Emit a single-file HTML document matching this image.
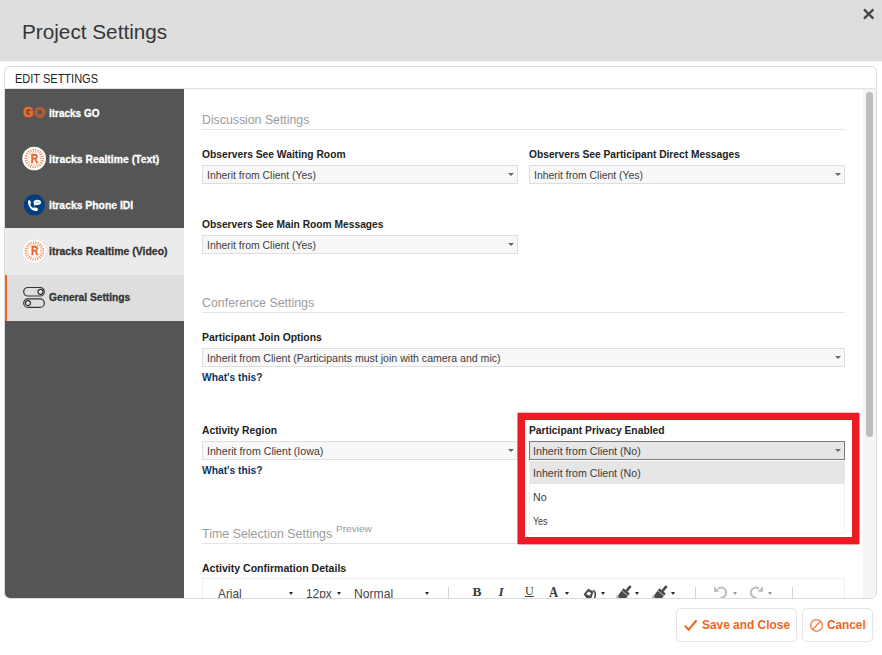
<!DOCTYPE html>
<html lang="en">
<head>
<meta charset="utf-8">
<title>Project Settings</title>
<style>
html,body{margin:0;padding:0;}
body{width:882px;height:655px;position:relative;overflow:hidden;background:#fff;
  font-family:"Liberation Sans",sans-serif;color:#222;}
.abs{position:absolute;}
.t{position:absolute;white-space:nowrap;line-height:1;transform-origin:0 0;display:block;}
.b{font-weight:bold;}
#hdr{left:0;top:0;width:882px;height:61px;background:#dedede;}
#panel{left:4px;top:66px;width:873px;height:533px;box-sizing:border-box;border:1px solid #dadada;
  border-radius:6px;overflow:hidden;background:#fff;}
#pg{left:-5px;top:-67px;width:882px;height:655px;}
#side{left:5px;top:89px;width:179px;height:509px;background:#555;}
.row{position:absolute;left:5px;width:179px;}
.lbl{font-size:11px;font-weight:bold;color:#222;}
.sec{font-size:13px;color:#9c9c9c;}
.hr{position:absolute;left:202px;width:643px;height:1px;background:#e4e4e4;}
.sel{position:absolute;box-sizing:border-box;height:19px;border:1px solid #dedede;background:#f8f8f8;}
.sel i{position:absolute;right:3px;top:7px;width:0;height:0;border-left:3.2px solid transparent;
  border-right:3.2px solid transparent;border-top:3.6px solid #666;}
.st{font-size:11px;color:#3c3c3c;}
.lnk{font-size:11px;font-weight:bold;color:#0b3562;}
.side-t{font-size:11px;font-weight:bold;color:#fff;-webkit-text-stroke:0.3px currentColor;}
.tb{font-size:13px;color:#444;}
.car{position:absolute;width:0;height:0;border-left:2.6px solid transparent;border-right:2.6px solid transparent;border-top:3.2px solid #2a2a2a;}
.ser{font-family:"Liberation Serif",serif;color:#3c3c3c;}
.vsep{position:absolute;width:1px;background:#d4d4d4;top:587px;height:12px;}
.btn{position:absolute;box-sizing:border-box;border:1px solid #e6e6e6;border-radius:5px;background:#fff;box-shadow:0 0 1px rgba(0,0,0,0.06);}
.bt{font-size:13px;font-weight:bold;color:#f26522;}
</style>
</head>
<body>
<div id="hdr" class="abs"></div>
<div class="abs" style="left:0;top:61px;width:882px;height:1px;background:#f2f2f2;"></div>
<span id="title" class="t" style="left:22.0px;top:23px;font-size:19.5px;color:#363636;transform:scaleX(1.063);">Project Settings</span>
<svg class="abs" style="left:860px;top:4.7px" width="18" height="18" viewBox="0 0 18 18" aria-label="Close">
  <path d="M4 4.4 L13.4 13.6 M13.4 4.4 L4 13.6" stroke="#484848" stroke-width="2.3" fill="none"/>
</svg>

<div id="panel" class="abs"><div id="pg" class="abs">
  <span id="edit" class="t" style="left:14.5px;top:72px;font-size:13.3px;color:#222;transform:scaleX(0.828);">EDIT SETTINGS</span>
  <div class="abs" style="left:5px;top:88px;width:872px;height:1px;background:#e4e4e4;"></div>
  <div class="abs" style="left:184px;top:89px;width:679px;height:1px;background:#f4f4f4;"></div>

  <!-- sidebar -->
  <div id="side" class="abs"></div>
  <div class="row" style="top:228px;height:46.5px;background:#ebebeb;"></div>
  <div class="row" style="top:274.5px;height:46px;background:#dedede;"></div>
  <div class="abs" style="left:5px;top:274.5px;width:2px;height:46px;background:#f26522;"></div>

  <!-- GO logo -->
  <svg class="abs" style="left:22px;top:104px" width="26" height="18" viewBox="0 0 26 18">
    <text transform="translate(0.9,13.2) scale(0.9,1)" font-family="Liberation Sans, sans-serif" font-weight="bold" font-size="14.6" fill="#f36c21" stroke="#f36c21" stroke-width="0.7">G</text>
    <circle cx="17.9" cy="8.3" r="3.95" fill="none" stroke="#f26522" stroke-width="3.3" opacity="0.5"/>
    <circle cx="17.9" cy="8.3" r="4.6" fill="none" stroke="#f26522" stroke-width="1.6" stroke-dasharray="1 1.1" opacity="0.45"/>
  </svg>
  <span id="s1" class="t side-t" style="left:48.9px;top:108px;font-size:11.0px;transform:scaleX(0.906);">itracks GO</span>

  <!-- Realtime text logo -->
  <svg class="abs" style="left:21px;top:146px" width="27" height="26" viewBox="0 0 27 26">
    <circle cx="13.2" cy="12.5" r="11.85" fill="#fff"/>
    <circle cx="13.2" cy="12.5" r="9" fill="none" stroke="#f26522" stroke-width="1.45" stroke-dasharray="0.01 2.56" stroke-linecap="round" opacity="0.85"/>
    <circle cx="13.2" cy="12.5" r="7.6" fill="none" stroke="#f26522" stroke-width="1.2" stroke-dasharray="0.01 2.16" stroke-linecap="round" opacity="0.8"/>
    <circle cx="13.2" cy="12.5" r="6.35" fill="none" stroke="#f26522" stroke-width="0.9" stroke-dasharray="0.01 1.8" stroke-linecap="round" opacity="0.7"/>
    <text transform="translate(13.549999999999999,16.8) scale(0.84,1)" text-anchor="middle" font-family="Liberation Sans, sans-serif" font-weight="bold" font-size="12.4" fill="#ea611d" stroke="#ea611d" stroke-width="0.35">R</text>
  </svg>
  <span id="s2" class="t side-t" style="left:48.9px;top:154px;font-size:11.0px;transform:scaleX(0.945);">itracks Realtime (Text)</span>

  <!-- Phone IDI logo -->
  <svg class="abs" style="left:21px;top:192px" width="27" height="26" viewBox="0 0 27 26">
    <circle cx="13.4" cy="13" r="10.6" fill="#013e82"/>
    <path d="M7.0 9.6 C7.0 8.4 8.2 8.0 9.0 8.6 C9.9 9.3 10.1 11.2 9.6 12.3 C9.2 13.0 9.4 13.6 10.2 14.5 C11.1 15.5 12.0 16.0 12.8 15.7 C14.0 15.2 16.0 15.6 16.8 16.6 C17.5 17.5 17.0 18.6 15.8 18.9 C13.6 19.4 10.9 18.2 9.0 15.7 C7.6 13.8 6.9 11.5 7.0 9.6 Z" fill="#fff"/>
    <ellipse cx="16.3" cy="10.3" rx="3.7" ry="2.6" fill="#fff"/>
    <path d="M13.4 11.3 L12.9 13.9 L15.6 12.5 Z" fill="#fff"/>
    <circle cx="15" cy="10.3" r="0.55" fill="#5c82b4"/><circle cx="16.3" cy="10.3" r="0.55" fill="#5c82b4"/><circle cx="17.6" cy="10.3" r="0.55" fill="#5c82b4"/>
  </svg>
  <span id="s3" class="t side-t" style="left:48.9px;top:200px;font-size:11.0px;transform:scaleX(0.943);">itracks Phone IDI</span>

  <!-- Realtime video logo -->
  <svg class="abs" style="left:21px;top:238px" width="27" height="26" viewBox="0 0 27 26">
    <circle cx="13.4" cy="13.0" r="11.5" fill="#fff"/>
    <circle cx="13.4" cy="13.0" r="9" fill="none" stroke="#f26522" stroke-width="1.45" stroke-dasharray="0.01 2.56" stroke-linecap="round" opacity="0.85"/>
    <circle cx="13.4" cy="13.0" r="7.6" fill="none" stroke="#f26522" stroke-width="1.2" stroke-dasharray="0.01 2.16" stroke-linecap="round" opacity="0.8"/>
    <circle cx="13.4" cy="13.0" r="6.35" fill="none" stroke="#f26522" stroke-width="0.9" stroke-dasharray="0.01 1.8" stroke-linecap="round" opacity="0.7"/>
    <text transform="translate(13.75,17.3) scale(0.84,1)" text-anchor="middle" font-family="Liberation Sans, sans-serif" font-weight="bold" font-size="12.4" fill="#ea611d" stroke="#ea611d" stroke-width="0.35">R</text>
  </svg>
  <span id="s4" class="t side-t" style="left:48.9px;top:246px;color:#333;font-size:11.0px;transform:scaleX(0.952);">itracks Realtime (Video)</span>

  <!-- General settings icon -->
  <svg class="abs" style="left:21px;top:285px" width="26" height="25" viewBox="0 0 26 25">
    <rect x="2.7" y="2.5" width="20.6" height="8.5" rx="4.25" fill="none" stroke="#333" stroke-width="1.2"/>
    <circle cx="19.5" cy="6.85" r="2.5" fill="#eee" stroke="#333" stroke-width="1.2"/>
    <rect x="2.7" y="13.9" width="20.6" height="8.5" rx="4.25" fill="none" stroke="#333" stroke-width="1.2"/>
    <circle cx="7" cy="18.1" r="2.5" fill="#eee" stroke="#333" stroke-width="1.2"/>
  </svg>
  <span id="s5" class="t side-t" style="left:48.9px;top:292px;color:#333;font-size:11.0px;transform:scaleX(0.930);">General Settings</span>

  <!-- scrollbar -->
  <div class="abs" style="left:863px;top:89px;width:13px;height:510px;background:#f5f5f5;"></div>
  <div class="abs" style="left:866px;top:92px;width:7px;height:345px;border-radius:3.5px;background:#bdbdbd;"></div>

  <!-- main content -->
  <span id="h1" class="t sec" style="left:201.5px;top:113px;font-size:13.0px;transform:scaleX(0.946);">Discussion Settings</span>
  <div class="hr" style="top:129px;"></div>

  <span id="l1" class="t lbl" style="left:201.6px;top:149px;font-size:10.8px;transform:scaleX(0.952);">Observers See Waiting Room</span>
  <div class="sel" style="left:202px;top:165px;width:316px;"><i></i></div>
  <span id="v1" class="t st" style="left:206.9px;top:170px;font-size:10.9px;transform:scaleX(0.956);">Inherit from Client (Yes)</span>

  <span id="l2" class="t lbl" style="left:528.6px;top:149px;font-size:10.8px;transform:scaleX(0.947);">Observers See Participant Direct Messages</span>
  <div class="sel" style="left:529px;top:165px;width:316px;"><i></i></div>
  <span id="v2" class="t st" style="left:533.8px;top:170px;font-size:10.9px;transform:scaleX(0.956);">Inherit from Client (Yes)</span>

  <span id="l3" class="t lbl" style="left:201.6px;top:219px;font-size:10.8px;transform:scaleX(0.948);">Observers See Main Room Messages</span>
  <div class="sel" style="left:202px;top:235px;width:316px;"><i></i></div>
  <span id="v3" class="t st" style="left:206.9px;top:240px;font-size:10.9px;transform:scaleX(0.956);">Inherit from Client (Yes)</span>

  <span id="h2" class="t sec" style="left:201.5px;top:296px;font-size:13.0px;transform:scaleX(0.952);">Conference Settings</span>
  <div class="hr" style="top:312px;"></div>

  <span id="l4" class="t lbl" style="left:201.6px;top:332px;font-size:10.8px;transform:scaleX(0.960);">Participant Join Options</span>
  <div class="sel" style="left:202px;top:348px;width:643px;"><i></i></div>
  <span id="v4" class="t st" style="left:206.9px;top:353px;font-size:10.9px;transform:scaleX(0.970);">Inherit from Client (Participants must join with camera and mic)</span>
  <span id="w1" class="t lnk" style="left:201.6px;top:372px;font-size:10.8px;transform:scaleX(0.950);">What's this?</span>

  <span id="l5" class="t lbl" style="left:201.6px;top:425px;font-size:10.8px;transform:scaleX(0.954);">Activity Region</span>
  <div class="sel" style="left:202px;top:441px;width:316px;"><i></i></div>
  <span id="v5" class="t st" style="left:206.9px;top:446px;font-size:10.9px;transform:scaleX(0.976);">Inherit from Client (Iowa)</span>
  <span id="w2" class="t lnk" style="left:201.6px;top:465px;font-size:10.8px;transform:scaleX(0.950);">What's this?</span>

  <span id="h3" class="t sec" style="left:201.5px;top:527px;font-size:13.0px;transform:scaleX(0.957);">Time Selection Settings</span>
  <span id="pv" class="t" style="left:336.0px;top:524px;font-size:9.6px;color:#999;transform:scaleX(1.050);">Preview</span>
  <div class="hr" style="top:543px;"></div>

  <span id="l7" class="t lbl" style="left:201.6px;top:563px;font-size:10.8px;transform:scaleX(0.977);">Activity Confirmation Details</span>

  <!-- editor -->
  <div class="abs" style="left:202px;top:578px;width:643px;height:40px;border:1px solid #eeeeee;box-sizing:border-box;"></div>
  <span id="e1" class="t tb" style="left:218.3px;top:587px;font-size:13.3px;transform:scaleX(0.890);">Arial</span>
  <div class="car" style="left:289.4px;top:592.2px;"></div>
  <span id="e2" class="t tb" style="left:305.7px;top:587px;font-size:13.3px;transform:scaleX(0.893);">12px</span>
  <div class="car" style="left:337.1px;top:592.2px;"></div>
  <span id="e3" class="t tb" style="left:353.7px;top:587px;font-size:13.3px;transform:scaleX(0.912);">Normal</span>
  <div class="car" style="left:425.2px;top:592.2px;"></div>
  <div class="vsep" style="left:448px;"></div>
  <span id="eb" class="t ser b" style="left:472.6px;top:585.4px;font-size:13.4px;">B</span>
  <span id="ei" class="t ser b" style="left:498.6px;top:585.4px;font-size:13.4px;font-style:italic;">I</span>
  <span id="eu" class="t ser" style="left:524.6px;top:584.2px;font-size:13.2px;text-decoration:underline;transform:scaleX(0.92);">U</span>
  <span id="ea" class="t ser b" style="left:549.4px;top:586.4px;font-size:13.6px;transform:scaleX(0.93);">A</span>
  <div class="car" style="left:565.4px;top:592.2px;"></div>
  <!-- bucket -->
  <svg class="abs" style="left:582px;top:586px" width="16" height="14" viewBox="0 0 16 14">
    <path d="M1.6 8.2 L6.2 2.8 L11.6 5.4 L9.4 12 L4.4 12 Z" fill="#4a4a4a"/>
    <path d="M4.2 8 L6.6 5.6 L9.2 7 L7.6 9.8 Z" fill="#fff"/>
    <path d="M11.2 4 Q14.6 6.4 12.6 12" stroke="#4a4a4a" stroke-width="1.5" fill="none"/>
  </svg>
  <div class="car" style="left:601.1px;top:592.2px;"></div>
  <svg class="abs" style="left:615.8px;top:585px" width="16" height="15" viewBox="0 0 16 15"><path d="M10.9 5.5 L13.9 1.9" stroke="#4a4a4a" stroke-width="2.7" stroke-linecap="round" fill="none"/><path d="M7.4 3.2 L13.8 8.6 L9.4 14 L2.4 14 L2.2 10.2 Z" fill="#4a4a4a"/><path d="M5.6 5.4 L11.9 10.8" stroke="#fff" stroke-width="0.7" fill="none"/><path d="M0.300 10.400 L2.400 10.400 L2.400 14 L0.300 14 Z" fill="#b5b5b5"/></svg>
  <div class="car" style="left:635.4px;top:592.2px;"></div>
  <svg class="abs" style="left:651.8px;top:585px" width="16" height="15" viewBox="0 0 16 15"><path d="M10.9 5.5 L13.9 1.9" stroke="#4a4a4a" stroke-width="2.7" stroke-linecap="round" fill="none"/><path d="M7.4 3.2 L13.8 8.6 L9.4 14 L2.4 14 L2.2 10.2 Z" fill="#4a4a4a"/><path d="M5.6 5.4 L11.9 10.8" stroke="#fff" stroke-width="0.7" fill="none"/><path d="M0.300 10.400 L2.400 10.400 L2.400 14 L0.300 14 Z" fill="#b5b5b5"/></svg>
  <div class="car" style="left:670.7px;top:592.2px;"></div>
  <div class="vsep" style="left:695px;"></div>
  <svg class="abs" style="left:712px;top:584px" width="18" height="16" viewBox="0 0 18 16">
    <path d="M6.2 4.6 A5 5 0 1 1 8.6 13.6" fill="none" stroke="#bdbdbd" stroke-width="2"/><path d="M2 2.2 L2 8 L7.6 7.4 Z" fill="#bdbdbd"/>
  </svg>
  <div class="car" style="left:732.8px;top:592.2px;border-top-color:#999;"></div>
  <svg class="abs" style="left:747px;top:584px" width="18" height="16" viewBox="0 0 18 16">
    <path d="M11.8 4.600 A5 5 0 1 0 9.400 13.600" fill="none" stroke="#bdbdbd" stroke-width="2"/><path d="M16 2.200 L16 8 L10.400 7.400 Z" fill="#bdbdbd"/>
  </svg>
  <div class="car" style="left:767.9px;top:592.2px;border-top-color:#999;"></div>
  <div class="vsep" style="left:792px;"></div>
</div></div>

<!-- highlighted open dropdown (above panel clip? it is inside panel region, so fine) -->
<span id="l6" class="t lbl" style="left:529.0px;top:425px;font-size:10.8px;transform:scaleX(0.953);">Participant Privacy Enabled</span>
<div class="abs" style="left:529px;top:441px;width:316px;height:19px;box-sizing:border-box;border:1px solid #7a7a7a;background:#e6e6e6;"></div>
<div class="abs" style="left:835px;top:449px;width:0;height:0;border-left:3.200px solid transparent;border-right:3.200px solid transparent;border-top:3.400px solid #6a6a6a;"></div>
<span id="v6" class="t st" style="left:533.2px;top:446px;font-size:10.9px;transform:scaleX(0.978);">Inherit from Client (No)</span>
<div class="abs" style="left:529px;top:460px;width:316px;height:73.500px;box-sizing:border-box;border:1px solid #f0f0f0;border-top:none;background:#fff;"></div>
<div class="abs" style="left:529.500px;top:460.500px;width:315px;height:23.800px;background:#e6e6e6;"></div>
<span id="o1" class="t st" style="left:533.2px;top:468px;font-size:10.9px;transform:scaleX(0.978);">Inherit from Client (No)</span>
<span id="o2" class="t st" style="left:533.2px;top:492px;font-size:10.9px;transform:scaleX(0.976);">No</span>
<span id="o3" class="t st" style="left:533.4px;top:516px;font-size:10.9px;transform:scaleX(0.815);">Yes</span>
<div class="abs" style="left:518px;top:413px;width:341px;height:131px;box-sizing:border-box;border:7px solid #ed1c24;box-shadow:-1px 0 0 rgba(237,28,36,0.55),0 -1px 0 rgba(237,28,36,0.3),1px 0 0 rgba(237,28,36,0.5),0 1px 0 rgba(237,28,36,0.4);"></div>

<!-- buttons -->
<div class="btn" style="left:676px;top:608px;width:121px;height:34px;"></div>
<svg class="abs" style="left:682px;top:616.5px" width="18" height="16" viewBox="0 0 18 16">
  <path d="M2.800 8.600 L6.600 12.600 L14.600 3.200" fill="none" stroke="#f26522" stroke-width="2.100"/>
</svg>
<span id="b1" class="t bt" style="left:701.5px;top:618px;font-size:13.2px;transform:scaleX(0.903);">Save and Close</span>
<div class="btn" style="left:802px;top:608px;width:71px;height:34px;"></div>
<svg class="abs" style="left:808px;top:618px" width="16" height="16" viewBox="0 0 16 16">
  <circle cx="8.5" cy="7.4" r="5.8" fill="none" stroke="#f26522" stroke-width="1.25" opacity="0.85"/>
  <path d="M4.5 11.5 L12.5 3.3" stroke="#f26522" stroke-width="1.25" opacity="0.85"/>
</svg>
<span id="b2" class="t bt" style="left:826.5px;top:618px;font-size:13.2px;transform:scaleX(0.894);">Cancel</span>
</body>
</html>
